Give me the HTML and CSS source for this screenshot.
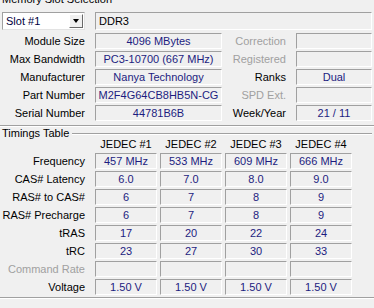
FILE: index.html
```html
<!DOCTYPE html>
<html>
<head>
<meta charset="utf-8">
<link rel="stylesheet" href="styles.css">
</head>
<body>
<div class="panel">
  <div class="title">Memory Slot Selection</div>
  <div class="slot-row">
    <div class="combo">
      <span class="combo-text">Slot #1</span>
      <span class="combo-btn"><span class="arrow"></span></span>
    </div>
    <div class="box type">DDR3</div>
  </div>
  <div class="info">
    <div class="lbl">Module Size</div><div class="box val">4096 MBytes</div>
    <div class="lbl dis">Correction</div><div class="box"></div>

    <div class="lbl">Max Bandwidth</div><div class="box val">PC3-10700 (667 MHz)</div>
    <div class="lbl dis">Registered</div><div class="box"></div>

    <div class="lbl">Manufacturer</div><div class="box val">Nanya Technology</div>
    <div class="lbl">Ranks</div><div class="box val">Dual</div>

    <div class="lbl">Part Number</div><div class="box val">M2F4G64CB8HB5N-CG</div>
    <div class="lbl dis">SPD Ext.</div><div class="box"></div>

    <div class="lbl">Serial Number</div><div class="box val">44781B6B</div>
    <div class="lbl">Week/Year</div><div class="box val">21 / 11</div>
  </div>
  <div class="sep"></div>
  <div class="group-head">
    <span>Timings Table</span>
    <span class="group-line"></span>
  </div>
  <div class="timings">
    <div></div>
    <div class="hdr">JEDEC #1</div>
    <div class="hdr">JEDEC #2</div>
    <div class="hdr">JEDEC #3</div>
    <div class="hdr">JEDEC #4</div>

    <div class="tl">Frequency</div>
    <div class="box val">457 MHz</div><div class="box val">533 MHz</div><div class="box val">609 MHz</div><div class="box val">666 MHz</div>

    <div class="tl">CAS# Latency</div>
    <div class="box val">6.0</div><div class="box val">7.0</div><div class="box val">8.0</div><div class="box val">9.0</div>

    <div class="tl">RAS# to CAS#</div>
    <div class="box val">6</div><div class="box val">7</div><div class="box val">8</div><div class="box val">9</div>

    <div class="tl">RAS# Precharge</div>
    <div class="box val">6</div><div class="box val">7</div><div class="box val">8</div><div class="box val">9</div>

    <div class="tl">tRAS</div>
    <div class="box val">17</div><div class="box val">20</div><div class="box val">22</div><div class="box val">24</div>

    <div class="tl">tRC</div>
    <div class="box val">23</div><div class="box val">27</div><div class="box val">30</div><div class="box val">33</div>

    <div class="tl dis">Command Rate</div>
    <div class="box"></div><div class="box"></div><div class="box"></div><div class="box"></div>

    <div class="tl">Voltage</div>
    <div class="box val">1.50 V</div><div class="box val">1.50 V</div><div class="box val">1.50 V</div><div class="box val">1.50 V</div>
  </div>
  <div class="sep bottom"></div>
</div>
</body>
</html>
```
FILE: styles.css
```css
html, body {
  margin: 0;
  padding: 0;
  background: #f0f0f0;
  overflow: hidden;
}
body {
  width: 374px;
  height: 308px;
  font-family: "Liberation Sans", Arial, sans-serif;
  font-size: 11px;
  color: #000;
}
.panel {
  width: 374px;
}
.title {
  line-height: 13px;
  height: 13px;
  margin-top: -7px;
  padding-left: 2px;
  white-space: nowrap;
}
.slot-row {
  display: flex;
  margin-top: 6px;
  height: 18px;
}
.combo {
  margin-left: 2px;
  width: 83px;
  height: 18px;
  box-sizing: border-box;
  background: #fff;
  border-top: 1px solid #a0a0a0;
  border-left: 1px solid #a0a0a0;
  border-right: 1px solid #e3e3e3;
  border-bottom: 1px solid #e3e3e3;
  display: flex;
  align-items: center;
  justify-content: space-between;
  padding: 1px;
}
.combo-text {
  padding-left: 2px;
  color: #000040;
  line-height: 14px;
}
.combo-btn {
  width: 14px;
  height: 14px;
  box-sizing: border-box;
  background: #f0f0f0;
  border-top: 1px solid #fff;
  border-left: 1px solid #fff;
  border-right: 1px solid #696969;
  border-bottom: 1px solid #696969;
  display: flex;
  align-items: center;
  justify-content: center;
}
.arrow {
  width: 0;
  height: 0;
  border-left: 3.5px solid transparent;
  border-right: 3.5px solid transparent;
  border-top: 4px solid #000;
}
.box {
  box-sizing: border-box;
  border-top: 1px solid #a0a0a0;
  border-left: 1px solid #a0a0a0;
  border-right: 1px solid #fff;
  border-bottom: 1px solid #fff;
  height: 16px;
  line-height: 14px;
  text-align: center;
  white-space: nowrap;
  overflow: hidden;
}
.val {
  color: #1c1c80;
}
.type {
  margin-left: 10px;
  width: 277px;
  height: 18px;
  line-height: 16px;
  text-align: left;
  padding-left: 3px;
}
.info {
  display: grid;
  grid-template-columns: 95px 127px 74px 76px;
  grid-auto-rows: 16px;
  row-gap: 2px;
  margin-top: 3px;
}
.lbl {
  text-align: right;
  padding-right: 10px;
  line-height: 16px;
  white-space: nowrap;
}
.dis {
  color: #a0a0a0;
}
.sep {
  margin-top: 4px;
  height: 0;
  border-top: 1px solid #a0a0a0;
  border-bottom: 1px solid #fff;
}
.sep.bottom {
  margin-top: 2px;
}
.group-head {
  display: flex;
  align-items: center;
  height: 13px;
  line-height: 13px;
  padding-left: 2px;
  width: 370px;
}
.group-line {
  flex: 1;
  height: 0;
  margin-left: 3px;
  border-top: 1px solid #a0a0a0;
  border-bottom: 1px solid #fff;
}
.timings {
  display: grid;
  grid-template-columns: 92px 62px 62px 62px 62px;
  grid-template-rows: 14px;
  grid-auto-rows: 16px;
  column-gap: 3px;
  row-gap: 2px;
  margin-top: -3px;
}
.hdr {
  text-align: center;
  line-height: 14px;
  white-space: nowrap;
}
.tl {
  text-align: right;
  padding-right: 7px;
  line-height: 16px;
  white-space: nowrap;
}
```
